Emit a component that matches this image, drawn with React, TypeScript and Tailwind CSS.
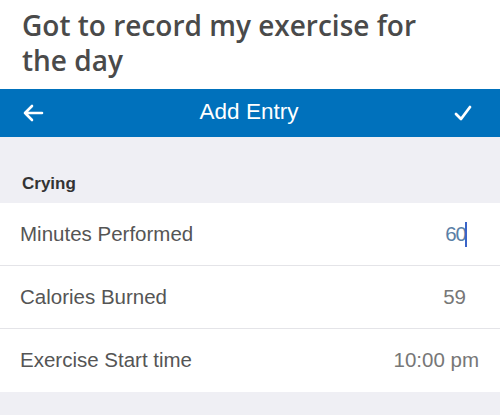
export default function App() {
  const rows = [
    { label: "Minutes Performed", value: "60", active: true },
    { label: "Calories Burned", value: "59" },
    { label: "Exercise Start time", value: "10:00 pm" },
  ]

  return (
    <div className="w-[500px] h-[415px] overflow-hidden bg-[#efeff4] font-['Open_Sans',sans-serif]">
      <div className="bg-white h-[89px] pl-[22px] pt-[8px]">
        <h1 className="text-[28px] leading-[35px] font-semibold text-[#4a4a4a]">
          Got to record my exercise for
          <br />
          the day
        </h1>
      </div>

      <div className="h-[48px] bg-[#0071bc] flex items-center justify-between px-[22px] text-white">
        <svg width="22" height="18" viewBox="0 0 22 18" fill="none" stroke="currentColor" strokeWidth="2.6" strokeLinecap="round" strokeLinejoin="round">
          <path d="M20 9H3M10 2L3 9l7 7" />
        </svg>
        <span className="text-[22.5px] font-['Liberation_Sans',sans-serif] -mt-[2px]">Add Entry</span>
        <svg width="18" height="16" viewBox="0 0 18 16" fill="none" stroke="currentColor" strokeWidth="2.8" strokeLinecap="round" strokeLinejoin="round" className="mr-[6px]">
          <path d="M2 9l5 5L16 2" />
        </svg>
      </div>

      <div className="h-[66px] flex items-end pl-[22px] pb-[7px]">
        <span className="text-[17px] font-semibold text-[#333] font-['Liberation_Sans',sans-serif]">Crying</span>
      </div>

      <div className="bg-white font-['Liberation_Sans',sans-serif] text-[20.5px] text-[#555]">
        {rows.map((r, i) => (
          <div
            key={r.label}
            className={`h-[63px] flex items-center justify-between pl-[20px] pr-[21px] ${i < rows.length - 1 ? "border-b border-[#e4e4e8]" : ""}`}
          >
            <span>{r.label}</span>
            {r.active ? (
              <span className="flex items-center text-[#5a7fa6] pr-[12px]">
                6<span className="-ml-px">0</span>
                <span className="w-[2px] h-[25px] bg-[#3a64c8] -ml-[2px]" />
              </span>
            ) : (
              <span className={`text-[#777] ${r.value === "59" ? "pr-[13px]" : ""}`}>{r.value}</span>
            )}
          </div>
        ))}
      </div>
    </div>
  )
}
